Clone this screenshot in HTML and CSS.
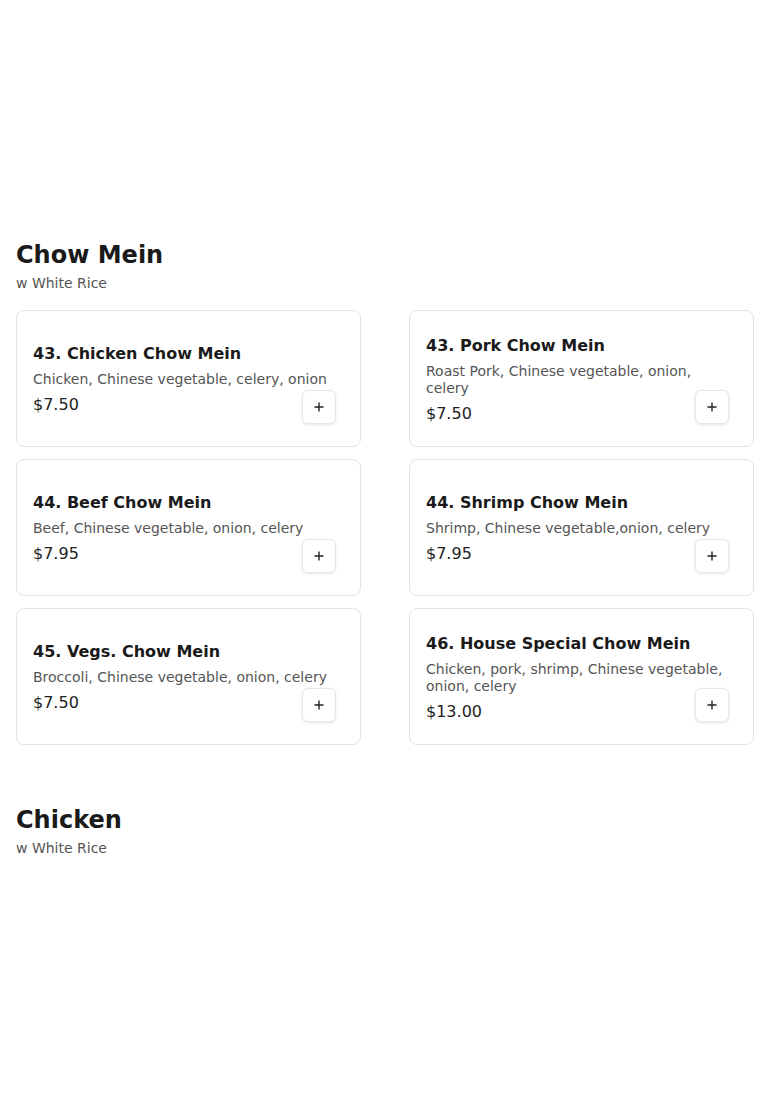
FILE: index.html
```html
<!DOCTYPE html>
<html lang="en">
<head>
<meta charset="utf-8">
<title>Menu</title>
<link rel="stylesheet" href="styles.css">
</head>
<body>
<main class="menu">
  <section class="category">
    <h2 class="cat-title">Chow Mein</h2>
    <p class="cat-sub">w White Rice</p>
    <div class="grid">
      <div class="card">
        <div class="info">
          <h3 class="name">43. Chicken Chow Mein</h3>
          <p class="desc">Chicken, Chinese vegetable, celery, onion</p>
          <p class="price">$7.50</p>
        </div>
        <button class="add" aria-label="Add"><svg viewBox="0 0 10 10" width="10" height="10"><path d="M5 0.5V9.5M0.5 5H9.5" stroke="#222" stroke-width="1.4" fill="none"/></svg></button>
      </div>
      <div class="card">
        <div class="info">
          <h3 class="name">43. Pork Chow Mein</h3>
          <p class="desc">Roast Pork, Chinese vegetable, onion, celery</p>
          <p class="price">$7.50</p>
        </div>
        <button class="add" aria-label="Add"><svg viewBox="0 0 10 10" width="10" height="10"><path d="M5 0.5V9.5M0.5 5H9.5" stroke="#222" stroke-width="1.4" fill="none"/></svg></button>
      </div>
      <div class="card">
        <div class="info">
          <h3 class="name">44. Beef Chow Mein</h3>
          <p class="desc">Beef, Chinese vegetable, onion, celery</p>
          <p class="price">$7.95</p>
        </div>
        <button class="add" aria-label="Add"><svg viewBox="0 0 10 10" width="10" height="10"><path d="M5 0.5V9.5M0.5 5H9.5" stroke="#222" stroke-width="1.4" fill="none"/></svg></button>
      </div>
      <div class="card">
        <div class="info">
          <h3 class="name">44. Shrimp Chow Mein</h3>
          <p class="desc">Shrimp, Chinese vegetable,onion, celery</p>
          <p class="price">$7.95</p>
        </div>
        <button class="add" aria-label="Add"><svg viewBox="0 0 10 10" width="10" height="10"><path d="M5 0.5V9.5M0.5 5H9.5" stroke="#222" stroke-width="1.4" fill="none"/></svg></button>
      </div>
      <div class="card">
        <div class="info">
          <h3 class="name">45. Vegs. Chow Mein</h3>
          <p class="desc">Broccoli, Chinese vegetable, onion, celery</p>
          <p class="price">$7.50</p>
        </div>
        <button class="add" aria-label="Add"><svg viewBox="0 0 10 10" width="10" height="10"><path d="M5 0.5V9.5M0.5 5H9.5" stroke="#222" stroke-width="1.4" fill="none"/></svg></button>
      </div>
      <div class="card">
        <div class="info">
          <h3 class="name">46. House Special Chow Mein</h3>
          <p class="desc">Chicken, pork, shrimp, Chinese vegetable, onion, celery</p>
          <p class="price">$13.00</p>
        </div>
        <button class="add" aria-label="Add"><svg viewBox="0 0 10 10" width="10" height="10"><path d="M5 0.5V9.5M0.5 5H9.5" stroke="#222" stroke-width="1.4" fill="none"/></svg></button>
      </div>
    </div>
  </section>
  <section class="category">
    <h2 class="cat-title">Chicken</h2>
    <p class="cat-sub">w White Rice</p>
  </section>
</main>
</body>
</html>
```
FILE: styles.css
```css
html, body {
  margin: 0;
  padding: 0;
  background: #ffffff;
}
body {
  font-family: "DejaVu Sans", sans-serif;
  color: #1a1a1a;
}
.menu {
  padding: 239px 16px 0 16px;
  display: flex;
  flex-direction: column;
  gap: 59px;
}
.cat-title {
  margin: 0;
  font-size: 24px;
  line-height: 32px;
  font-weight: bold;
  color: #1a1a1a;
}
.cat-sub {
  margin: 2px 0 0 0;
  font-size: 14px;
  line-height: 20px;
  color: #555555;
}
.grid {
  margin-top: 17px;
  display: grid;
  grid-template-columns: 1fr 1fr;
  column-gap: 48px;
  row-gap: 12px;
}
.card {
  position: relative;
  box-sizing: border-box;
  height: 137px;
  border: 1px solid #e3e3e3;
  border-radius: 8px;
  padding: 2px 16px 0 16px;
  display: flex;
  align-items: center;
  background: #fff;
}
.info {
  width: 100%;
}
.name {
  margin: 0;
  font-size: 16px;
  line-height: 24px;
  font-weight: bold;
  color: #1a1a1a;
}
.desc {
  margin: 5px 0 0 0;
  font-size: 14px;
  line-height: 17px;
  color: #555555;
}
.price {
  margin: 5px 0 0 0;
  font-size: 16px;
  line-height: 24px;
  color: #222222;
}
.add {
  position: absolute;
  right: 24px;
  bottom: 22px;
  width: 34px;
  height: 34px;
  padding: 0;
  border: 1px solid #e6e6e6;
  border-radius: 6px;
  background: #ffffff;
  box-shadow: 0 1px 3px rgba(0, 0, 0, 0.10);
  display: flex;
  align-items: center;
  justify-content: center;
  cursor: pointer;
}
```
